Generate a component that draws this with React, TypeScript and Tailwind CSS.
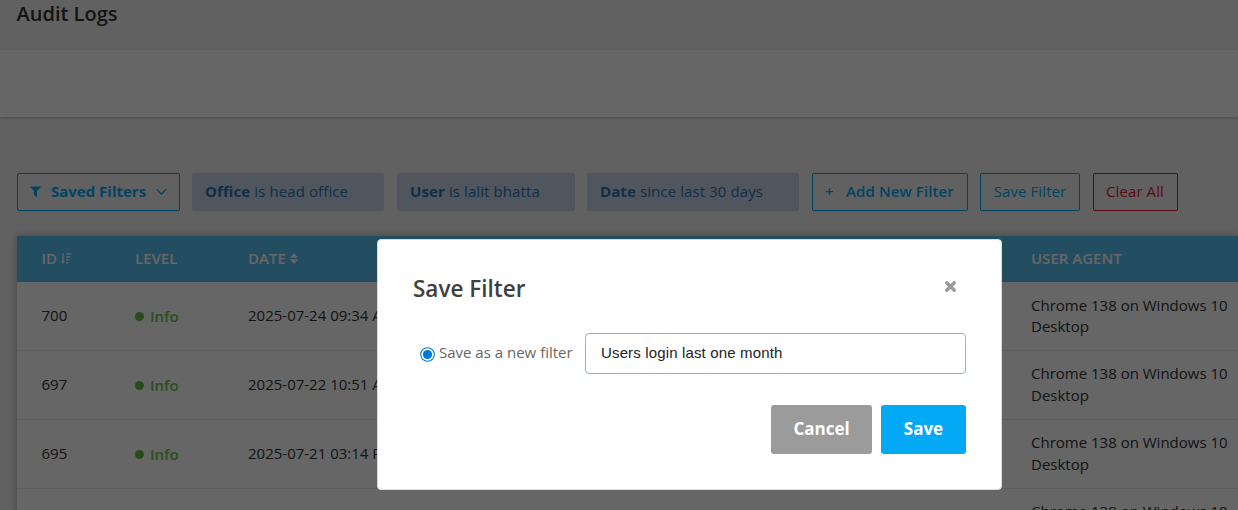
import type { ReactNode } from "react";

interface LogEntry {
  id: string;
  date: string;
  agent: string;
  device: string;
}

interface FilterChipProps {
  field: string;
  value: string;
  className: string;
}

const logs: LogEntry[] = [
  { id: "700", date: "2025-07-24 09:34 AM", agent: "Chrome 138 on Windows 10", device: "Desktop" },
  { id: "697", date: "2025-07-22 10:51 AM", agent: "Chrome 138 on Windows 10", device: "Desktop" },
  { id: "695", date: "2025-07-21 03:14 PM", agent: "Chrome 138 on Windows 10", device: "Desktop" },
];

const FilterIcon = () => (
  <svg viewBox="0 0 11 11" className="w-[11px] h-[11px]" fill="currentColor">
    <path d="M.6.5h9.8c.4 0 .6.5.3.8L7 5.1v5.3c0 .4-.4.6-.7.3L4.2 9.1A.6.6 0 0 1 4 8.6V5.1L.3 1.3C0 1 .2.5.6.5z" />
  </svg>
);

const ChevronIcon = () => (
  <svg viewBox="0 0 12 8" className="w-[11px] h-[8px] mt-[2px]" fill="none" stroke="currentColor" strokeWidth="1.4">
    <path d="M1.2 1.4 6 6.2l4.8-4.8" strokeLinecap="round" />
  </svg>
);

const SortAmountIcon = () => (
  <svg viewBox="0 0 10 11" className="w-[10px] h-[11px] mt-[1px]" fill="currentColor">
    <path d="M1.3 0h1.2v8.3H4L1.9 10.8 0 8.3h1.3zM5 .2h5v1.3H5zM5 3.2h4.2v1.3H5zM5 6.2h3.2v1.3H5zM5 9.2h2v1.3H5z" />
  </svg>
);

const SortIcon = () => (
  <svg viewBox="0 0 8 11" className="w-[8px] h-[11px] mt-[1px]" fill="currentColor">
    <path d="M4 .3 7.8 4.2c.2.3 0 .5-.3.5h-7c-.3 0-.5-.2-.3-.5zM4 10.7.2 6.8c-.2-.3 0-.5.3-.5h7c.3 0 .5.2.3.5z" />
  </svg>
);

const CloseIcon = () => (
  <svg viewBox="0 0 13 13" className="w-[13px] h-[13px]" fill="none">
    <path d="M2.7 2.7l7.6 7.6M10.3 2.7l-7.6 7.6" stroke="currentColor" strokeWidth="3.4" strokeLinecap="round" />
  </svg>
);

const FilterChip = ({ field, value, className }: FilterChipProps) => (
  <div className={`h-[38px] px-[13px] pb-[2px] flex items-center rounded-[3px] bg-[#c8d4ea] text-[#2974b9] ${className}`}>
    <span className="whitespace-nowrap tracking-[0.1px]">
      <b className="font-bold">{field}</b> {value}
    </span>
  </div>
);

const HeaderCell = ({ children, className }: { children: ReactNode; className: string }) => (
  <div className={`flex items-center gap-1 pb-[2px] font-semibold shrink-0 ${className}`}>{children}</div>
);

const SaveFilterDialog = () => (
  <div className="w-[625px] h-[251px] bg-white rounded-[4px] border border-[#d6dde2] px-[35px] flex flex-col">
    <div className="flex justify-between items-center mt-[32px] h-[32px]">
      <h2 className="text-[22.5px] leading-[32px] pt-[1px] font-semibold text-[#404040]">Save Filter</h2>
      <button className="mr-[9px] mb-[3px] text-[#999]" aria-label="Close">
        <CloseIcon />
      </button>
    </div>

    <div className="flex items-center mt-[29px] h-[41px]">
      <label className="flex items-center w-[172px] pb-[2px] text-[15px] text-[#666]">
        <svg viewBox="0 0 15 15" className="w-[15px] h-[15px] ml-[6.5px] mr-[4.5px] mt-[3px] shrink-0">
          <circle cx="7.5" cy="7.5" r="6.8" fill="white" stroke="#0078d7" strokeWidth="1.1" />
          <circle cx="7.5" cy="7.5" r="4.6" fill="#0078d7" />
        </svg>
        <span className="whitespace-nowrap">Save as a new filter</span>
      </label>
      <input
        type="text"
        defaultValue="Users login last one month"
        className="w-[381px] h-[41px] px-[15px] pb-[3px] border border-solid border-[#85b7d9] rounded-[4px] font-['Liberation_Sans'] text-[15px] tracking-[0.15px] text-[#222] outline-none"
      />
    </div>

    <div className="flex justify-end gap-[9px] mt-[31px]">
      <button className="w-[101px] h-[49px] pb-[2px] rounded-[3px] bg-[#9b9b9b] text-white text-[17px] font-bold">
        Cancel
      </button>
      <button className="w-[85px] h-[49px] pb-[2px] rounded-[3px] bg-[#03a9f4] text-white text-[17px] font-bold">
        Save
      </button>
    </div>
  </div>
);

const App = () => {
  return (
    <div className="relative w-full h-[510px] overflow-hidden bg-[#f3f3f3] font-['Open_Sans',sans-serif] text-[15px]">
      {/* Page title */}
      <header className="h-[50px] pl-[16.5px]">
        <h1 className="text-[20px] leading-[28px] font-semibold text-[#333]">Audit Logs</h1>
      </header>
      <div className="h-[67px] bg-white shadow-[0_1px_3px_rgba(0,0,0,0.25)]" />

      {/* Filters */}
      <div className="flex pl-[17px] mt-[56px]">
        <button className="w-[163px] h-[38px] pl-[12px] pb-[2px] flex items-center border border-[#03a9f4] rounded-[2px] text-[#03a9f4] font-bold">
          <FilterIcon />
          <span className="ml-[10px] mr-[10px]">Saved Filters</span>
          <ChevronIcon />
        </button>
        <FilterChip field="Office" value="is head office" className="w-[192px] ml-[12px]" />
        <FilterChip field="User" value="is lalit bhatta" className="w-[178px] ml-[13px]" />
        <FilterChip field="Date" value="since last 30 days" className="w-[212px] ml-[12px]" />
        <button className="w-[156px] h-[38px] pl-[12px] pb-[2px] ml-[13px] flex items-center border border-[#03a9f4] rounded-[2px] text-[#03a9f4] font-semibold">
          <span className="w-[21px] text-left">+</span>
          <span className="tracking-[0.1px]">Add New Filter</span>
        </button>
        <button className="w-[100px] h-[38px] pb-[2px] ml-[12px] border border-[#03a9f4] rounded-[2px] text-[#03a9f4] tracking-[0.1px]">
          Save Filter
        </button>
        <button className="w-[85px] h-[38px] pb-[2px] pr-[1px] ml-[13px] border border-[#e1182d] rounded-[2px] text-[#e1182d] tracking-[0.1px]">
          Clear All
        </button>
      </div>

      {/* Log table */}
      <div className="ml-[17px] mt-[25px] bg-white shadow-[0_0_8px_rgba(0,0,0,0.3)]">
        <div className="flex h-[46px] pl-[24.5px] bg-[#58c3f3] text-white">
          <HeaderCell className="w-[93.5px]">
            ID <SortAmountIcon />
          </HeaderCell>
          <HeaderCell className="w-[113px]">LEVEL</HeaderCell>
          <HeaderCell className="w-[783px]">
            DATE <SortIcon />
          </HeaderCell>
          <HeaderCell className="w-[207px]">USER AGENT</HeaderCell>
        </div>
        {logs.map((log) => (
          <div key={log.id} className="flex items-center h-[68.86px] pl-[24.5px] border-b border-[#eaeaea] text-[#333]">
            <span className="w-[93.5px] pb-[1.7px] shrink-0">{log.id}</span>
            <span className="w-[113px] pb-[1.7px] shrink-0 flex items-center gap-[6px] text-[#6cc24a] font-semibold">
              <span className="w-[9px] h-[9px] mt-[3px] rounded-full bg-[#61be3c]" />
              <span className="mt-[2px]">Info</span>
            </span>
            <span className="w-[783px] pb-[1.7px] shrink-0">{log.date}</span>
            <span className="shrink-0 leading-[21.4px]">
              {log.agent}
              <br />
              {log.device}
            </span>
          </div>
        ))}
        {/* Next row, scrolled past the fold */}
        <div className="h-[69px] pt-[12.5px] pl-[1014px] text-[#333] leading-[21.4px]">
          Chrome 138 on Windows 10
        </div>
      </div>

      {/* Save filter modal */}
      <div className="absolute inset-0 bg-black/60 pt-[239px] pl-[377px]">
        <SaveFilterDialog />
      </div>
    </div>
  );
};

export default App;
